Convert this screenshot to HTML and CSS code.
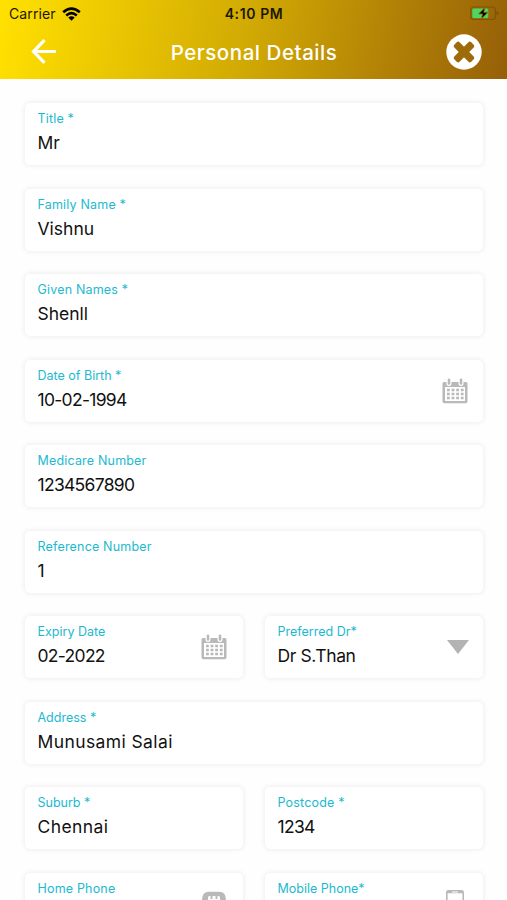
FILE: index.html
```html
<!DOCTYPE html>
<html lang="en">

<head>
    <meta charset="UTF-8">
    <meta name="viewport" content="width=device-width, initial-scale=1.0">
    <title>Personal Details</title>
    <link rel="stylesheet" href="styles.css">
</head>

<body>
    <!-- Shared icons -->
    <svg class="sprite" width="0" height="0">
        <symbol id="calendar" viewBox="0 0 26 26">
            <path fill="#b9b9b9" fill-rule="evenodd" d="M2 4h22q1.500 0 1.500 1.500v18q0 1.800-1.800 1.800H2.300Q.5 25.300.5 23.500v-18Q.5 4 2 4zM3 9v14h20V9z" />
            <path stroke="#fff" stroke-width="5" stroke-linecap="round" d="M7 2.500v3M19 2.500v3" />
            <path stroke="#b9b9b9" stroke-width="2.600" stroke-linecap="round" d="M7 1.800v3.700M19 1.800v3.700" />
            <path stroke="#b9b9b9" stroke-width="2.600" stroke-dasharray="2.800 1.800" d="M5 12h17M5 16h17M5 20h17" />
        </symbol>
    </svg>

    <header class="header">
        <div class="status-bar">
            <div class="carrier">
                <span>Carrier</span>
                <svg width="19" height="14" viewBox="0 0 19 14">
                    <path fill="none" stroke="#000" stroke-width="2.600" d="M1.200 5.200Q9.500-2 17.800 5.200M4.200 8.400q5.300-4.600 10.600 0" />
                    <path d="M6.300 10.500q3.200-2.700 6.400 0L9.500 13.700z" />
                </svg>
            </div>
            <span class="time">4:10 PM</span>
            <svg class="battery" width="30" height="15" viewBox="0 0 30 15">
                <rect x="1.800" y="1" width="24.500" height="12.500" rx="3" fill="none" stroke="#7c5508" stroke-width="1.200" />
                <rect x="3.300" y="2.500" width="16" height="9.500" rx="1.500" fill="#4bd763" />
                <path fill="#7c5508" d="M27.500 5q2 .5 2 2.300t-2 2.300z" />
                <path stroke="#a06f08" stroke-width=".8" d="M16 1.500L9.500 8h4l-1.200 5L19 6.300h-4.200z" />
            </svg>
        </div>
        <div class="nav-bar">
            <svg width="26" height="26" viewBox="0 0 26 26">
                <path fill="none" stroke="#fff" stroke-width="3.200" d="M13.500 1.200L2.500 12.500l11 11.300M2.500 12.500H25" />
            </svg>
            <h1>Personal Details</h1>
            <svg width="36" height="36" viewBox="0 0 36 36">
                <circle cx="18" cy="18" r="17.700" fill="#fff" />
                <g fill="#9d6b09" transform="rotate(45 18 18)">
                    <rect x="6" y="14.300" width="24" height="7.400" rx="2" />
                    <rect x="14.300" y="6" width="7.400" height="24" rx="2" />
                </g>
            </svg>
        </div>
    </header>

    <main class="form">
        <div class="field">
            <div class="label">Title *</div>
            <div class="value">Mr</div>
        </div>
        <div class="field">
            <div class="label">Family Name *</div>
            <div class="value">Vishnu</div>
        </div>
        <div class="field">
            <div class="label">Given Names *</div>
            <div class="value">Shenll</div>
        </div>
        <div class="field with-icon">
            <div>
                <div class="label tight">Date of Birth *</div>
                <div class="value digits">10-02-1994</div>
            </div>
            <svg width="26" height="26"><use href="#calendar" /></svg>
        </div>
        <div class="field">
            <div class="label">Medicare Number</div>
            <div class="value digits">1234567890</div>
        </div>
        <div class="field">
            <div class="label">Reference Number</div>
            <div class="value digits">1</div>
        </div>
        <div class="row">
            <div class="field with-icon">
                <div>
                    <div class="label tight">Expiry Date</div>
                    <div class="value digits">02-2022</div>
                </div>
                <svg width="26" height="26"><use href="#calendar" /></svg>
            </div>
            <div class="field with-icon">
                <div>
                    <div class="label tight">Preferred Dr*</div>
                    <div class="value doctor">Dr S.Than</div>
                </div>
                <svg class="arrow" width="22" height="14" viewBox="0 0 22 14">
                    <path fill="#b3b3b3" d="M0 0h22L11 14z" />
                </svg>
            </div>
        </div>
        <div class="field">
            <div class="label tight">Address *</div>
            <div class="value wide">Munusami Salai</div>
        </div>
        <div class="row">
            <div class="field">
                <div class="label tight">Suburb *</div>
                <div class="value wide">Chennai</div>
            </div>
            <div class="field">
                <div class="label">Postcode *</div>
                <div class="value digits">1234</div>
            </div>
        </div>
        <div class="row">
            <div class="field with-icon">
                <div>
                    <div class="label">Home Phone</div>
                    <div class="value"></div>
                </div>
                <svg width="26" height="26" viewBox="0 0 26 26">
                    <path fill="#b9b9b9" d="M1 9Q1 .8 8 .8h10q7 0 7 8.200h-5v4q4 3 4 9v3H2v-3q0-6 4-9V9z" />
                    <path fill="#fff" d="M7 10V6.500Q7 5 8.500 5h9Q19 5 19 6.500V10z" />
                    <path stroke="#b9b9b9" stroke-width="2" d="M10.500 5v3M15.500 5v3" />
                    <circle cx="13" cy="17" r="4" fill="#fff" />
                </svg>
            </div>
            <div class="field with-icon">
                <div>
                    <div class="label tight">Mobile Phone*</div>
                    <div class="value"></div>
                </div>
                <svg class="mobile" width="18" height="28" viewBox="0 0 18 28">
                    <rect x=".8" y=".8" width="16.400" height="26.400" rx="2" fill="#fff" stroke="#b9b9b9" stroke-width="1.600" />
                    <path stroke="#b9b9b9" stroke-width="2.400" d="M1 2h16M1 24h16" />
                    <path stroke="#fff" d="M6 2h6" />
                </svg>
            </div>
        </div>
    </main>
</body>

</html>
```
FILE: styles.css
```css
* {
    box-sizing: border-box;
}

body {
    margin: 0;
    height: 900px;
    overflow: hidden;
    background-color: #fefefe;
    font-family: Inter, "Liberation Sans", sans-serif;
    color: #111;
}

svg {
    display: block;
    flex-shrink: 0;
}

.sprite {
    position: absolute;
}

.header {
    height: 79px;
    background: linear-gradient(100deg, #ffe000 1%, #d0a804 50%, #965f08 100%);
}

.status-bar {
    display: grid;
    grid-template-columns: 1fr auto 1fr;
    align-items: center;
    height: 27px;
    padding: 0 8px 0 9px;
    color: #1c1800;
}

.carrier {
    display: flex;
    align-items: center;
    gap: 6px;
    font-size: 14px;
    letter-spacing: 0.1px;
}

.time {
    font-size: 14px;
    font-weight: 600;
    letter-spacing: 0.6px;
}

.battery {
    justify-self: end;
}

.nav-bar {
    display: flex;
    align-items: center;
    justify-content: space-between;
    height: 50px;
    padding: 0 25px 0 31px;
}

h1 {
    margin: 0 0 0 5px;
    color: #fff;
    font-size: 20.5px;
    font-weight: 500;
    letter-spacing: 0.55px;
}

.form {
    display: flex;
    flex-direction: column;
    gap: 23.5px;
    padding: 24px 24px 0 25px;
}

.row {
    display: grid;
    grid-template-columns: 1fr 1fr;
    gap: 22px;
}

.field {
    height: 62px;
    padding: 7px 12px 7px 12.5px;
    background-color: #fff;
    border-radius: 5px;
    box-shadow: 0 0 5px 1px rgba(0, 0, 0, 0.065);
}

.with-icon {
    display: flex;
    justify-content: space-between;
    padding-right: 15px;
}

.row .with-icon {
    padding-right: 16px;
}

.with-icon svg {
    margin-top: 11px;
}

.with-icon .arrow {
    margin-top: 17px;
    margin-right: -2px;
}

.with-icon .mobile {
    margin-right: 3px;
    margin-top: 10px;
}

.label {
    color: #1cb9cf;
    font-size: 12.5px;
    line-height: 18px;
    letter-spacing: 0.18px;
    white-space: nowrap;
}

.tight {
    letter-spacing: 0;
}

.value {
    margin-top: 3px;
    font-size: 17.5px;
    line-height: 24px;
    white-space: nowrap;
}

/* Keep the numbers tight */
.digits {
    letter-spacing: -0.7px;
}

.doctor {
    letter-spacing: -0.4px;
}

.wide {
    letter-spacing: 0.4px;
}
```
